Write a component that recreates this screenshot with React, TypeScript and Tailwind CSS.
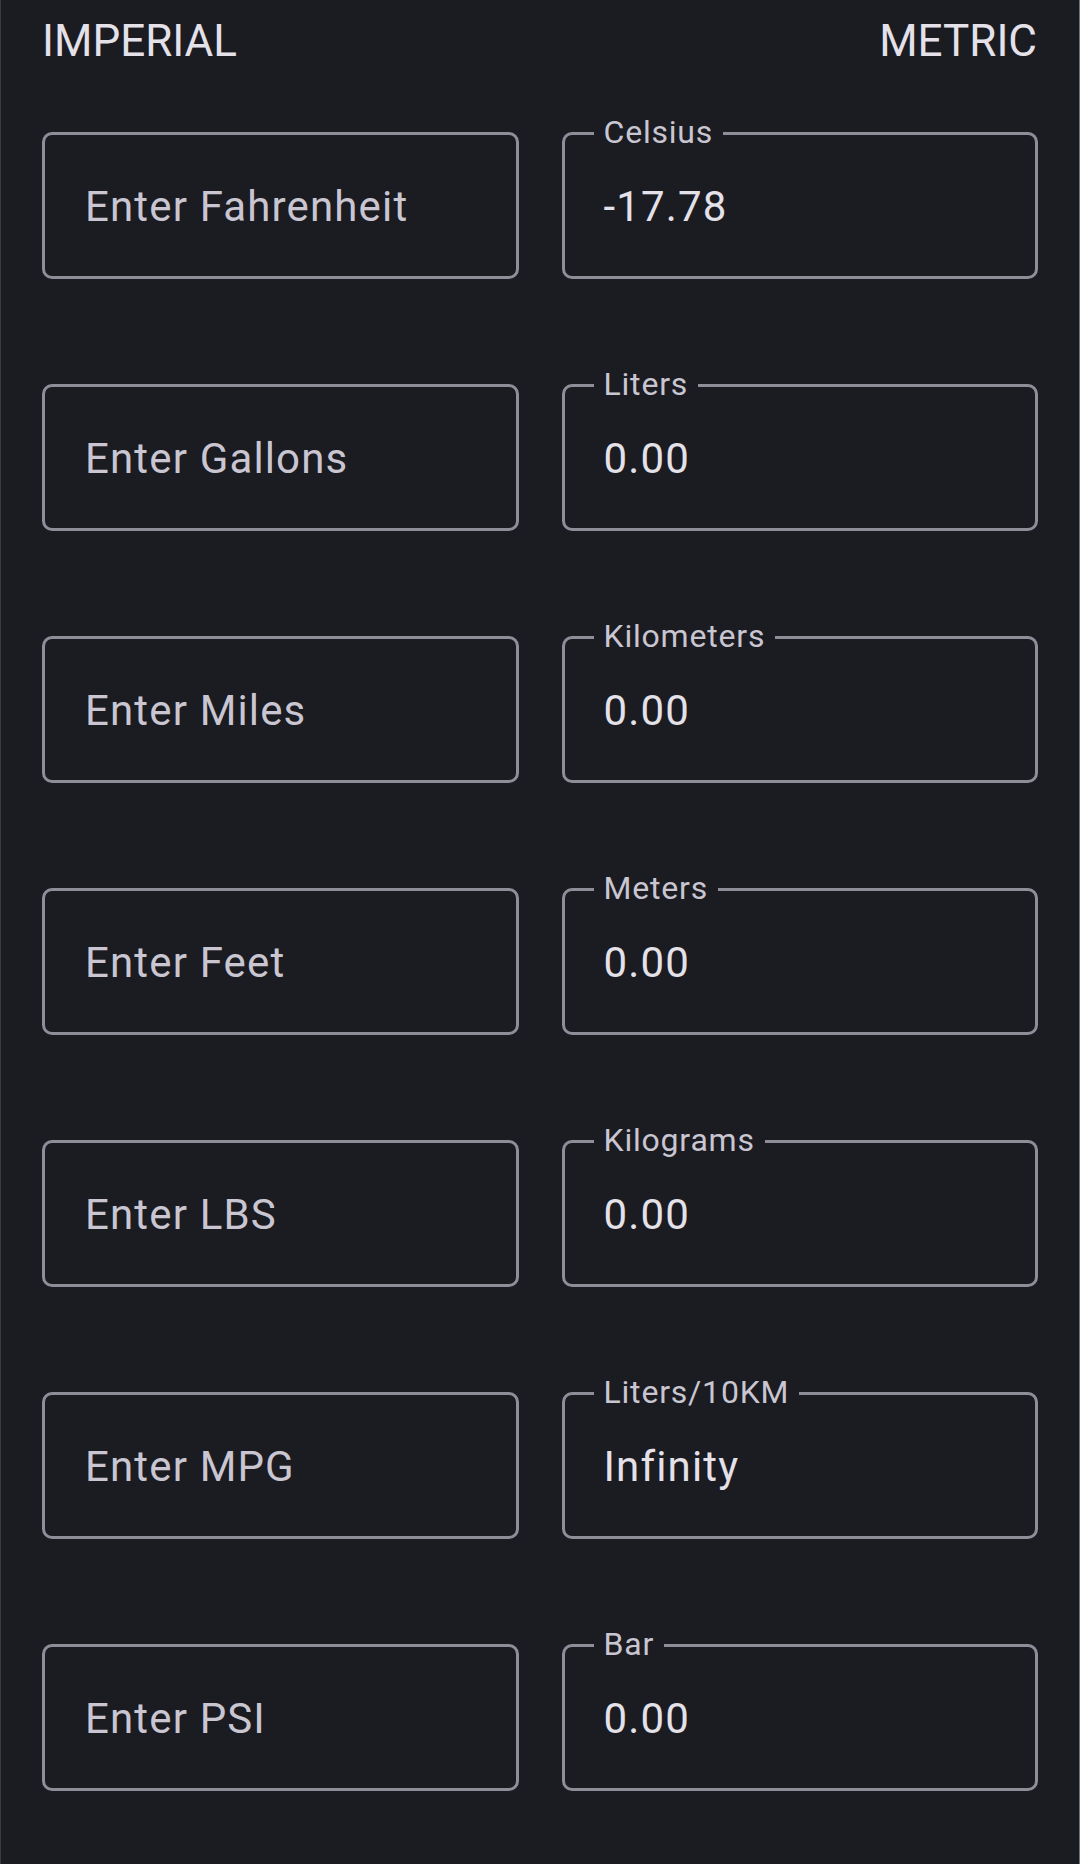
import React from "react";

const rows: { imperial: string; label: string; value: string }[] = [
  { imperial: "Enter Fahrenheit", label: "Celsius", value: "-17.78" },
  { imperial: "Enter Gallons", label: "Liters", value: "0.00" },
  { imperial: "Enter Miles", label: "Kilometers", value: "0.00" },
  { imperial: "Enter Feet", label: "Meters", value: "0.00" },
  { imperial: "Enter LBS", label: "Kilograms", value: "0.00" },
  { imperial: "Enter MPG", label: "Liters/10KM", value: "Infinity" },
  { imperial: "Enter PSI", label: "Bar", value: "0.00" },
];

export default function App() {
  return (
    <div
      className="w-[1080px] min-h-[1864px] bg-[#1b1b22] border-l border-l-[#3a3a42] border-r border-r-[#70707a] text-[#e4e1e9]"
      style={{ fontFamily: "Roboto, 'Noto Sans', sans-serif" }}
    >
      <div className="flex justify-between pl-[41px] pr-[42px] pt-[19px] text-[44px] leading-[44px]">
        <span>IMPERIAL</span>
        <span>METRIC</span>
      </div>
      <div className="mt-[69px] flex flex-col gap-[105px] px-[41px]">
        {rows.map((r) => (
          <div key={r.label} className="grid grid-cols-2 gap-[43px]">
            <div className="h-[147px] rounded-[10px] border-[3px] border-[#8f8e98] flex items-center pl-[40px] pt-[2px]">
              <span className="text-[42px] leading-none text-[#c9c6d1] tracking-[1.15px]">
                {r.imperial}
              </span>
            </div>
            <div className="relative h-[147px] rounded-[10px] border-[3px] border-[#8f8e98] flex items-center pl-[39px] pt-[2px]">
              <span className="absolute left-[29px] -top-[19px] h-[32px] px-[10px] bg-[#1b1b22] text-[32px] leading-[32px] text-[#c9c6d1] tracking-[0.8px]">
                {r.label}
              </span>
              <span className="text-[42px] leading-none text-[#e4e1e9] tracking-[1.15px]">
                {r.value}
              </span>
            </div>
          </div>
        ))}
      </div>
    </div>
  );
}
